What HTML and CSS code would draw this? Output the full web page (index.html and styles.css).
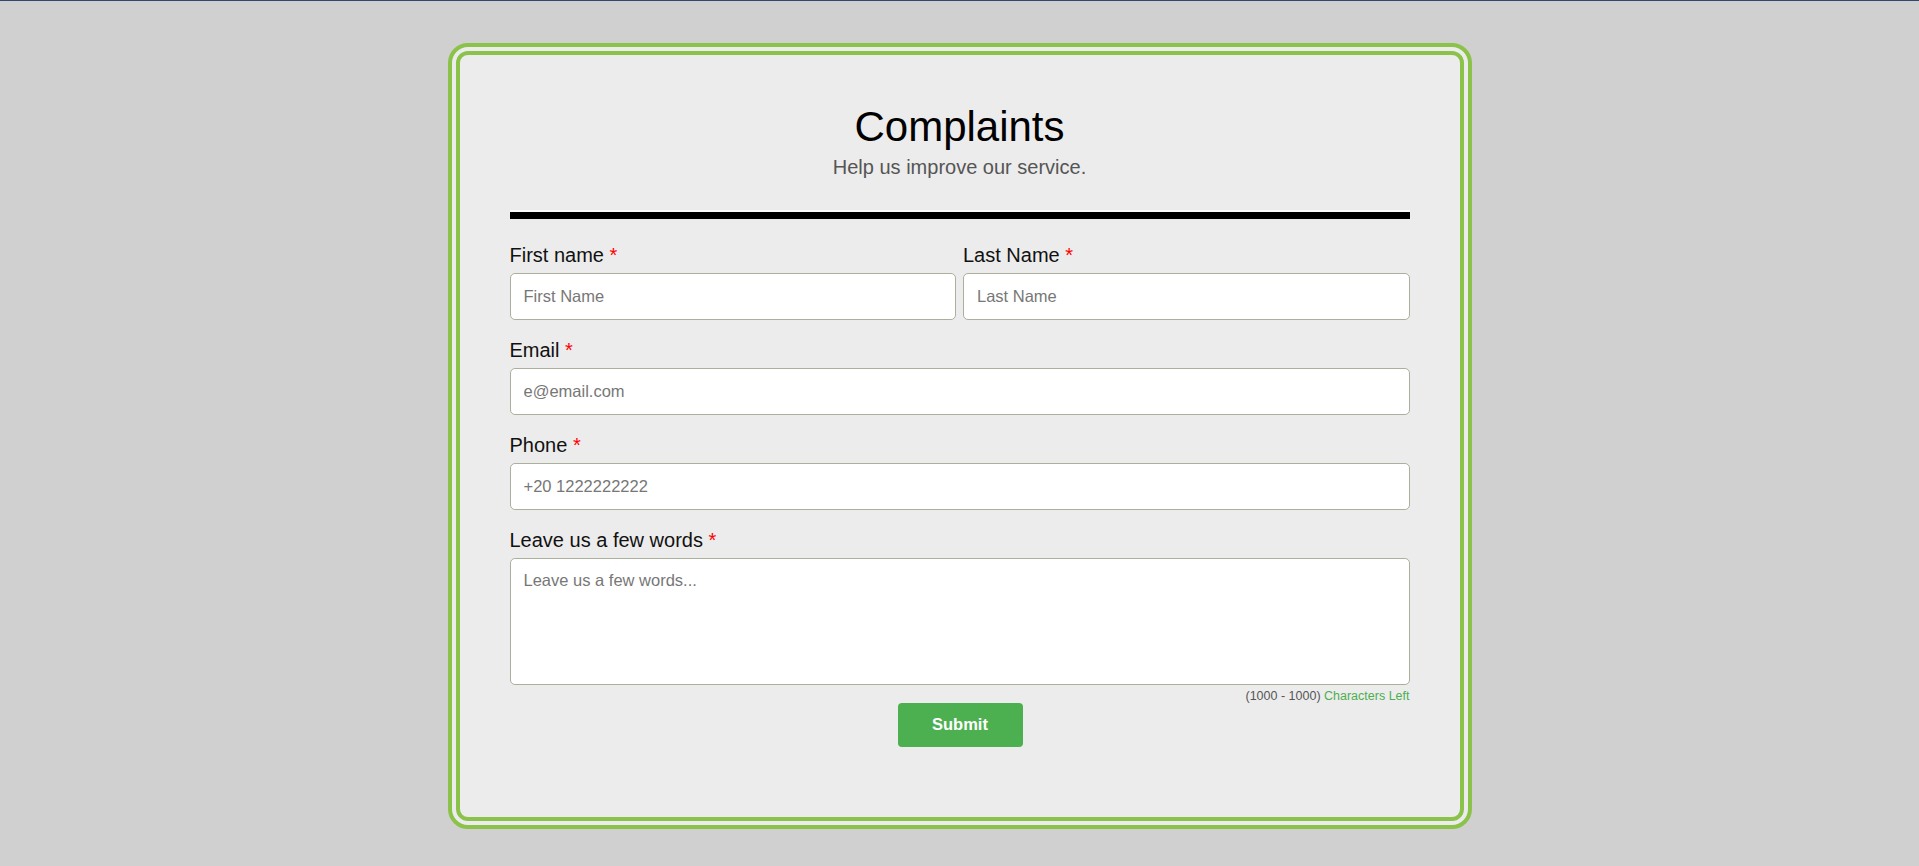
FILE: index.html
```html
<!DOCTYPE html>
<html lang="en">
<head>
<meta charset="utf-8">
<title>Complaints</title>
<link rel="stylesheet" href="styles.css">
</head>
<body>
<form class="card">
  <h1 class="title">Complaints</h1>
  <p class="subtitle">Help us improve our service.</p>
  <div class="divider"></div>

  <div class="row two">
    <div class="field">
      <label class="label">First name <span class="req">*</span></label>
      <input class="input" type="text" placeholder="First Name">
    </div>
    <div class="field">
      <label class="label">Last Name <span class="req">*</span></label>
      <input class="input" type="text" placeholder="Last Name">
    </div>
  </div>

  <div class="field">
    <label class="label">Email <span class="req">*</span></label>
    <input class="input" type="email" placeholder="e@email.com">
  </div>

  <div class="field">
    <label class="label">Phone <span class="req">*</span></label>
    <input class="input" type="tel" placeholder="+20 1222222222">
  </div>

  <div class="field last">
    <label class="label">Leave us a few words <span class="req">*</span></label>
    <textarea class="textarea" placeholder="Leave us a few words..."></textarea>
    <div class="count">(1000 - 1000) <span class="count-green">Characters Left</span></div>
  </div>

  <div class="actions">
    <button class="submit" type="button">Submit</button>
  </div>
</form>
</body>
</html>
```

FILE: styles.css
```css
* { box-sizing: border-box; }

html, body {
  margin: 0;
  padding: 0;
}

body {
  background: #d0d0d0;
  border-top: 1px solid #2e4a6c;
  min-height: 866px;
  font-family: "Liberation Sans", Arial, sans-serif;
  color: #111;
}

.card {
  width: 1024px;
  margin: 42px auto 0;
  border: 12px double #8bc34a;
  border-radius: 20px;
  background: #ececec;
  padding: 48px 50px 70px;
  display: flex;
  flex-direction: column;
}

.title {
  margin: 0;
  font-size: 42px;
  line-height: 48px;
  font-weight: normal;
  text-align: center;
  color: #000;
}

.subtitle {
  margin: 4px 0 0;
  font-size: 20px;
  line-height: 24px;
  text-align: center;
  color: #555;
}

.divider {
  margin-top: 31px;
  height: 9px;
  border-top: 2px solid #fff;
  background: #000;
}

.row.two {
  display: grid;
  grid-template-columns: 1fr 1fr;
  column-gap: 7px;
  margin-top: 24px;
}

.row.two .field { margin-top: 0; }

.field {
  display: flex;
  flex-direction: column;
  margin-top: 18px;
}

.label {
  font-size: 20px;
  line-height: 24px;
  margin-bottom: 6px;
  color: #111;
}

.req { color: #f00; }

.input,
.textarea {
  display: block;
  width: 100%;
  font-family: "Liberation Sans", Arial, sans-serif;
  font-size: 16.5px;
  color: #222;
  background: #fff;
  border: 1px solid #abb09c;
  border-radius: 5px;
  padding: 0 13px;
  outline: none;
}

.input { height: 47px; }

.textarea {
  height: 127px;
  padding: 12px 13px;
  resize: none;
}

.input::placeholder,
.textarea::placeholder { color: #777; }

.count {
  margin-top: 4px;
  font-size: 12.5px;
  line-height: 14px;
  text-align: right;
  color: #555;
}

.count-green { color: #4caf50; }

.actions {
  display: flex;
  justify-content: center;
  padding-left: 1px;
}

.submit {
  width: 125px;
  height: 44px;
  border: none;
  border-radius: 4px;
  background: #4caf50;
  color: #fff;
  font-family: "Liberation Sans", Arial, sans-serif;
  font-size: 16.5px;
  font-weight: bold;
  padding: 0 0 2px;
  cursor: pointer;
}
```
